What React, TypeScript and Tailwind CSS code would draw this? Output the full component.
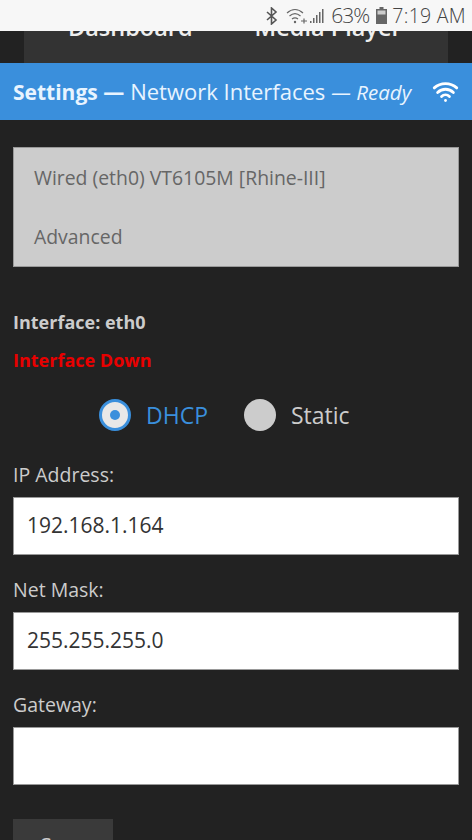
import { Wifi } from "lucide-react";

function StatusBar() {
  return (
    <div className="h-[31px] shrink-0 bg-[#f7f7f7] flex items-center justify-end pr-[6px] text-[#555]">
      <svg width="12" height="18" viewBox="0 0 12 18" fill="none" stroke="#555" strokeWidth="1.6">
        <path d="M1 5l9 8-4.500 4V1L10 5l-9 8" />
      </svg>
      <svg className="ml-[8px]" width="23" height="16" viewBox="0 0 23 16" fill="none" stroke="#666" strokeWidth="1.2">
        <path d="M1 5c5-4.500 11-4.500 16 0M3.500 8c3.500-3 7.500-3 11 0M6 11c2-1.500 4-1.500 6 0" />
        <circle cx="9" cy="14" r="1.200" fill="#666" stroke="none" />
        <path d="M15 13h6M18 10.500v5" />
      </svg>
      <svg className="ml-[1px]" width="15" height="16" viewBox="0 0 15 16" fill="#666">
        <rect x="0" y="13" width="1.500" height="2" />
        <rect x="3" y="10" width="1.500" height="5" />
        <rect x="6" y="7" width="1.500" height="8" />
        <rect x="9" y="4" width="1.500" height="11" />
        <rect x="12" y="1" width="1.500" height="14" />
      </svg>
      <span className="ml-[6px] text-[21px] font-light leading-none tracking-[-1px] text-[#444]">63%</span>
      <svg className="ml-[7px]" width="11" height="17" viewBox="0 0 11 17" fill="#666">
        <rect x="3.500" y="0" width="4" height="2" />
        <path d="M0 2h11v15H0z" />
        <rect x="1.500" y="3.500" width="8" height="4" fill="#ccc" />
      </svg>
      <span className="ml-[5px] text-[19.500px] font-light leading-none tracking-[0.3px] text-[#444]">7:19 AM</span>
    </div>
  );
}

function TopNav() {
  return (
    <div className="h-[32px] shrink-0 bg-[#222222] px-[24px] overflow-hidden">
      <div className="h-full bg-[#333333] flex items-end text-[23.500px] leading-[30px] font-semibold text-[#eeeeee] pb-[21px]">
        <span className="ml-[44px] shrink-0 h-[30px]">Dashboard</span>
        <span className="ml-[62px] shrink-0 h-[30px]">Media Player</span>
      </div>
    </div>
  );
}

function Field({ label, value }: { label: string; value: string }) {
  return (
    <div>
      <label className="block text-[19.500px] leading-[25px] text-[#cccccc]">{label}</label>
      <div className="mt-[10px] h-[58px] bg-white border border-[#999] flex items-center px-[13px] text-[21px] text-[#333333]">
        {value}
      </div>
    </div>
  );
}

export default function App() {
  return (
    <div className="w-[472px] h-[840px] overflow-hidden flex flex-col bg-[#222222] font-['Open_Sans',sans-serif]">
      <StatusBar />
      <TopNav />
      <div className="h-[57px] shrink-0 bg-[#3a8fdc] flex items-center justify-between pl-[13px] pr-[13px] text-[#e8f4ff]">
        <div className="flex items-baseline">
          <span className="text-[21px] font-bold">Settings —</span>
          <span className="text-[22px] ml-[6px]">Network Interfaces</span>
          <span className="text-[20.500px] italic ml-[6px]">— Ready</span>
        </div>
        <Wifi size={27} strokeWidth={2.500} className="text-white" />
      </div>

      <div className="px-[13px] pt-[27px]">
        <div className="h-[120px] bg-[#cccccc] border border-[#999] pl-[20px] flex flex-col justify-between py-[15px] text-[19.400px] text-[#666666]">
          <div>Wired (eth0) VT6105M [Rhine-III]</div>
          <div>Advanced</div>
        </div>

        <div className="mt-[43px] text-[18px] leading-[24px] font-bold text-[#cccccc]">Interface: eth0</div>
        <div className="mt-[14px] text-[18px] leading-[24px] font-bold text-[#e80000]">Interface Down</div>

        <div className="mt-[27px] ml-[86px] flex items-center h-[32px] text-[23px]">
          <span className="w-[32px] h-[32px] rounded-full border-[3px] border-[#3a8fdc] bg-[#e8e8e8] flex items-center justify-center">
            <span className="w-[10px] h-[10px] rounded-full bg-[#3a8fdc]" />
          </span>
          <span className="ml-[15px] text-[#3a8fdc]">DHCP</span>
          <span className="ml-[36px] w-[32px] h-[32px] rounded-full bg-[#cccccc]" />
          <span className="ml-[15px] text-[#cccccc]">Static</span>
        </div>

        <div className="mt-[31px] flex flex-col gap-[22px]">
          <Field label="IP Address:" value="192.168.1.164" />
          <Field label="Net Mask:" value="255.255.255.0" />
          <Field label="Gateway:" value="" />
        </div>

        <button className="mt-[34px] w-[100px] h-[60px] bg-[#3a3a3a] text-[#cccccc] text-[21px] pb-[4px]">Save</button>
      </div>
    </div>
  );
}
